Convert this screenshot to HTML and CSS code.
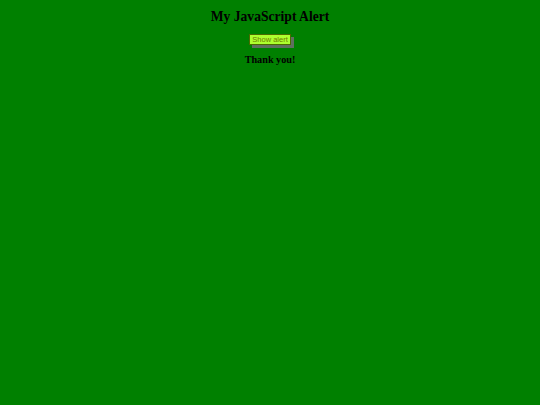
FILE: index.html
```html
<!DOCTYPE html>
<html>
<head>
<meta charset="utf-8">
<link rel="stylesheet" href="styles.css">
</head>
<body>
<h2 class="title">My JavaScript Alert</h2>
<div class="actions"><button class="alert-btn" type="button">Show alert</button></div>
<p class="thanks">Thank you!</p>
</body>
</html>
```
FILE: styles.css
```css
html, body { margin: 0; padding: 0; }
body {
  background: #008000;
  font-family: "Liberation Serif", "Times New Roman", serif;
  text-align: center;
  padding-top: 9px;
}
.title {
  margin: 0;
  font-size: 13.6px;
  line-height: 15px;
  font-weight: bold;
  color: #000;
}
.actions { margin-top: 10px; line-height: 0; }
.alert-btn {
  font-family: "Liberation Sans", Arial, sans-serif;
  font-size: 7.5px;
  line-height: 9px;
  height: 11px;
  padding: 0 2px;
  background: #adff2f;
  color: #6f7a00;
  border: 1px solid #4a6a00;
  box-shadow: 3px 3px 0 #5f705f;
  cursor: pointer;
}
.thanks {
  margin: 9px 0 0;
  font-size: 10.2px;
  font-weight: bold;
  line-height: 12px;
}
```
